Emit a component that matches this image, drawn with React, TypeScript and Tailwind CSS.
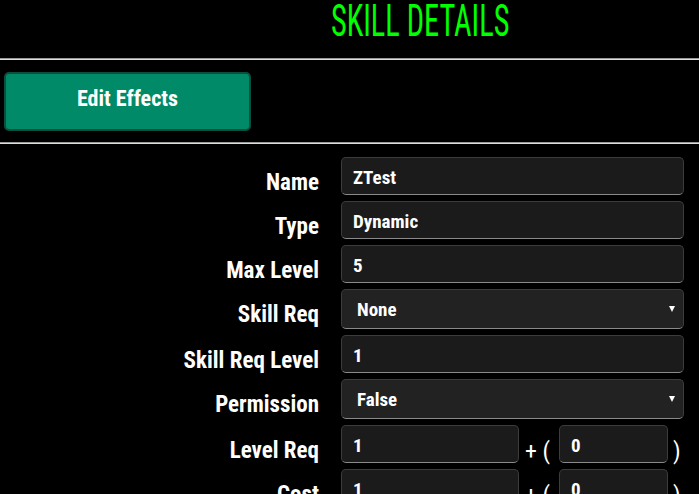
import { ChangeEvent, useState } from "react";

const fieldBase =
    "h-[38px] rounded-[5px] border border-[#3c3c3c] border-b-[#8a8a8a] bg-[#1b1b1b] pl-[11px] pt-[3px] text-[19px] font-bold text-white outline-none";

function Row({ label, children }: { label: string; children: React.ReactNode }) {
    return (
        <div className="flex items-start">
            <label className="h-[38px] w-[319px] shrink-0 text-right text-[23px] font-bold leading-[52px] text-white">
                {label}
            </label>
            <div className="ml-[22px] mr-[15px] flex-1">{children}</div>
        </div>
    );
}

function Select({ value, options, onChange }: { value: string; options: string[]; onChange: (v: string) => void }) {
    return (
        <div className="relative">
            <select
                value={value}
                onChange={(e: ChangeEvent<HTMLSelectElement>) => onChange(e.target.value)}
                className="h-[40px] w-full appearance-none rounded-[5px] border border-[#3c3c3c] border-b-[#8a8a8a] bg-[#222222] pl-[15px] pt-[3px] text-[19px] font-bold text-white outline-none"
            >
                {options.map((o) => (
                    <option key={o} value={o}>{o}</option>
                ))}
            </select>
            {/* dropdown arrow */}
            <span className="pointer-events-none absolute right-[9px] top-[17px] h-0 w-0 border-x-[3px] border-t-[6px] border-x-transparent border-t-white" />
        </div>
    );
}

function PairInput({ base, extra }: { base: string; extra: string }) {
    return (
        <div className="flex items-start">
            <input defaultValue={base} className={`${fieldBase} w-[178px]`} />
            <span className="ml-[6px] h-[38px] w-[34px] text-[24px] leading-[52px] text-white">+ (</span>
            <input defaultValue={extra} className={`${fieldBase} w-[109px]`} />
            <span className="ml-[5px] h-[38px] text-[24px] leading-[52px] text-white">)</span>
        </div>
    );
}

export default function App() {
    const [skillReq, setSkillReq] = useState("None");
    const [permission, setPermission] = useState("False");

    return (
        <div className="min-h-screen bg-black font-['Roboto_Condensed','Roboto',sans-serif] font-stretch-[75%] text-white">
            {/* Header */}
            <div className="flex h-[58px] justify-center pl-[142px] pt-[2px]">
                <h1 className="inline-block origin-center scale-x-[0.675] text-[45px] font-normal leading-[38px] text-[#00ff00]">
                    SKILL DETAILS
                </h1>
            </div>
            <div className="border-t border-b border-t-[#9a9a9a] border-b-[#dedede]" />

            <div className="pb-[11px] pl-[4px] pt-[12px]">
                <button className="flex h-[59px] w-[247px] items-center justify-center rounded-[5px] border-2 border-[#0c4f3d] bg-[#008a68] pb-[6px] text-[22px] font-bold text-white">
                    Edit Effects
                </button>
            </div>
            <div className="border-t border-b border-t-[#9a9a9a] border-b-[#dedede]" />

            {/* Form */}
            <div className="flex flex-col gap-[6px] pt-[13px]">
                <Row label="Name">
                    <input defaultValue="ZTest" className={`${fieldBase} w-full`} />
                </Row>
                <Row label="Type">
                    <input defaultValue="Dynamic" className={`${fieldBase} w-full`} />
                </Row>
                <Row label="Max Level">
                    <input defaultValue="5" className={`${fieldBase} w-full`} />
                </Row>
                <Row label="Skill Req">
                    <Select value={skillReq} options={["None"]} onChange={setSkillReq} />
                </Row>
                <Row label="Skill Req Level">
                    <input defaultValue="1" className={`${fieldBase} w-full`} />
                </Row>
                <Row label="Permission">
                    <Select value={permission} options={["False", "True"]} onChange={setPermission} />
                </Row>
                <Row label="Level Req">
                    <PairInput base="1" extra="0" />
                </Row>
                <Row label="Cost">
                    <PairInput base="1" extra="0" />
                </Row>
            </div>
        </div>
    );
}
